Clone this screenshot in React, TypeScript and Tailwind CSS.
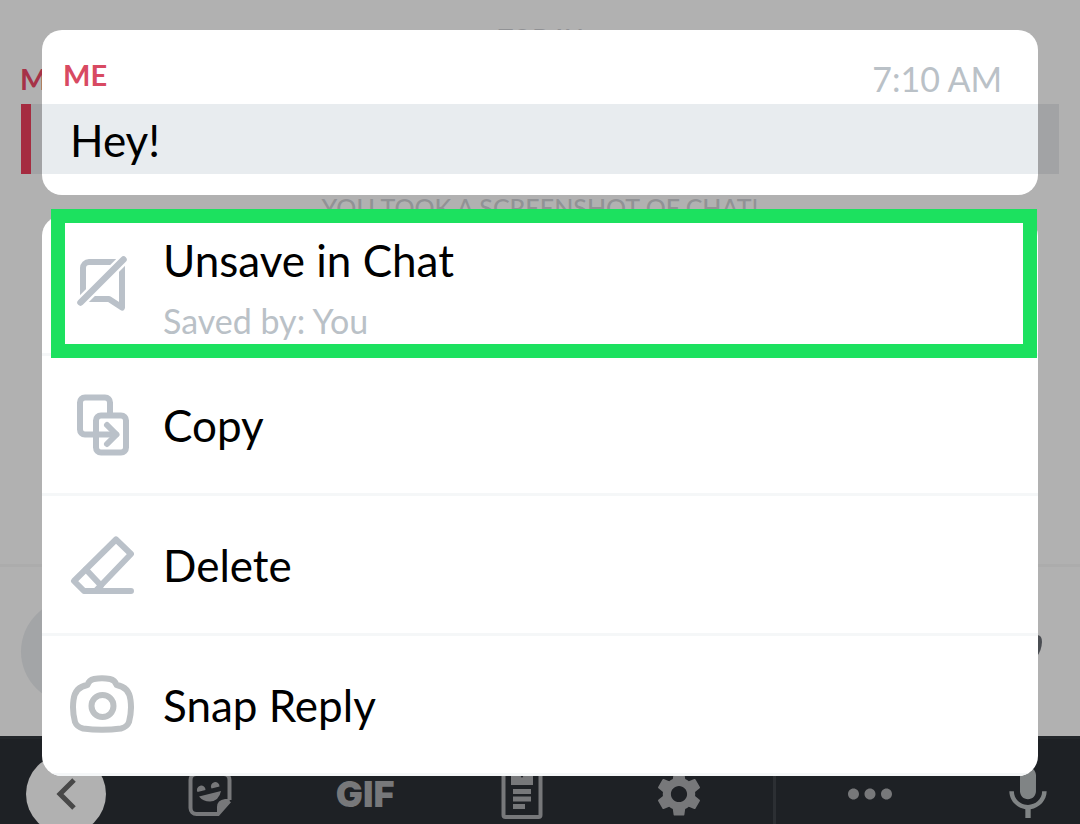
import type { ReactNode } from "react";
import { MdMic, MdMoreHoriz, MdSettings } from "react-icons/md";

function UnsaveIcon() {
  return (
    <svg viewBox="0 0 64 64" className="size-16 shrink-0" fill="none" aria-hidden="true">
      <path
        d="M46 9H19a6 6 0 0 0-6 6V46H39L52 54.500V12"
        stroke="#bac1c9"
        strokeWidth="6"
        strokeLinejoin="round"
      />
      <path d="M5 55L57 3" stroke="#fff" strokeWidth="11" />
      <path d="M10.500 49.500L53.500 6.500" stroke="#bac1c9" strokeWidth="6.500" strokeLinecap="round" />
    </svg>
  );
}

function CopyIcon() {
  return (
    <svg
      viewBox="0 0 64 64"
      className="size-16 shrink-0"
      fill="none"
      stroke="#bac1c9"
      strokeWidth="6"
      strokeLinecap="round"
      strokeLinejoin="round"
      aria-hidden="true"
    >
      <path d="M40 21V9.500a5 5 0 0 0-5-5H15a5 5 0 0 0-5 5v27a5 5 0 0 0 5 5h31" />
      <rect x="26" y="22.500" width="30" height="37" rx="5" />
      <path d="M37 32l9.500 9.500-9.500 9.500" />
    </svg>
  );
}

function EraserIcon() {
  return (
    <svg
      viewBox="0 0 64 64"
      className="size-16 shrink-0"
      fill="none"
      stroke="#bac1c9"
      strokeWidth="6"
      strokeLinecap="round"
      strokeLinejoin="round"
      aria-hidden="true"
    >
      <path d="M61 58H14L4 48 46 6.500l15 14.500L26 57.500" />
      <path d="M16 36.500l15 16" />
    </svg>
  );
}

function CameraIcon() {
  return (
    <svg
      viewBox="0 0 64 64"
      className="size-16 shrink-0"
      fill="none"
      stroke="#bdc1c4"
      strokeWidth="6"
      strokeLinejoin="round"
      aria-hidden="true"
    >
      <path d="M24 6Q32 4.500 40 6Q45 7 46.500 12Q59 14 60.500 27Q62 38 59 49Q57 54 51 55.500Q32 58 13 55.500Q7 54 5 49Q2 38 3.500 27Q5 14 17.500 12Q19 7 24 6Z" />
      <circle cx="32.500" cy="33" r="11" />
    </svg>
  );
}

function StickerIcon() {
  return (
    <svg viewBox="0 0 44 44" className="ml-1 size-11" fill="none" aria-hidden="true">
      <path
        d="M41.500 28V8a6 6 0 0 0-6-6H8.500a6 6 0 0 0-6 6v28a6 6 0 0 0 6 6H30L41.500 29"
        stroke="#77787a"
        strokeWidth="4"
      />
      <path
        d="M43 27h-6q-8 1-8 8v8ZM9.500 20a4.300 4.300 0 1 1 8-2ZM23.500 16.500a4.300 4.300 0 1 1 8-2ZM11 24.500L33 19q-2 10-11 10.500-7 0-11-5Z"
        fill="#77787a"
      />
    </svg>
  );
}

function ClipboardIcon() {
  return (
    <svg viewBox="0 0 44 52" className="h-13 w-11" fill="none" aria-hidden="true">
      <rect x="3.500" y="6" width="37" height="43" rx="2" stroke="#77787a" strokeWidth="4" />
      <path d="M11 4h7l4 6 4-6h7v13H11Z" fill="#77787a" />
      <path d="M13 23.500h18M13 31h18M13 38.500h12" stroke="#77787a" strokeWidth="5" />
    </svg>
  );
}

function MenuItem({
  icon,
  label,
  note,
}: {
  icon: ReactNode;
  label: string;
  note?: string;
}) {
  return (
    <button
      type="button"
      className="flex h-[140px] w-full items-center gap-[29px] border-b-[3px] border-[#f5f7f8] pl-7 text-left"
    >
      {icon}
      <span className={note ? "pt-2" : ""}>
        <span className="block text-[44px] leading-16 text-black">{label}</span>
        {note && (
          <span className="block text-[34px] leading-[58px] text-[#bac1c7]">
            {note}
          </span>
        )}
      </span>
    </button>
  );
}

function Conversation() {
  return (
    <div className="flex h-screen flex-col overflow-hidden bg-[#b1b1b1] pt-[21px] text-[#919295]">
      <p className="text-center text-[25px] leading-8 font-medium">TODAY</p>
      <p className="mt-2.5 px-5 text-[29px] leading-8 font-bold text-[#a63247]">ME</p>
      <div className="mx-[21px] mt-[9px] h-[70px] shrink-0 border-l-[10px] border-[#a52b40] bg-[#a2a3a5]" />
      <p className="mt-[17px] text-center text-[25px] leading-8 font-medium">
        YOU TOOK A SCREENSHOT OF CHAT!
      </p>

      {/* Composer */}
      <div className="mt-auto flex h-[172px] shrink-0 items-center justify-between border-t-[3px] border-[#acacac] px-[21px]">
        <div className="h-[105px] w-4/5 rounded-full bg-[#a3a5a7]" />
        <svg viewBox="0 0 48 28" className="mr-3 mb-2 h-7 w-12" aria-hidden="true">
          <path d="M8 1H38Q43 1 43 8Q42 27 24 27T5 8Q5 1 8 1Z" fill="#4a4d52" />
        </svg>
      </div>

      {/* Keyboard toolbar */}
      <div className="h-[88px] shrink-0 overflow-hidden border-t-[3px] border-[#23272b] bg-[#1e2125]">
        <div className="flex h-[110px] items-center text-[#77787a] [&>button]:flex [&>button]:justify-center">
          <div className="w-[130px] pl-[26px]">
            <button
              type="button"
              aria-label="Back"
              className="flex size-20 items-center justify-center rounded-full bg-[#b1b1b1]"
            >
              <svg viewBox="0 0 32 32" className="size-8" fill="none" aria-hidden="true">
                <path d="M24 2L10 16l14 14" stroke="#484848" strokeWidth="5" />
              </svg>
            </button>
          </div>
          <button type="button" aria-label="Stickers" className="flex-1">
            <StickerIcon />
          </button>
          <button
            type="button"
            className="flex-1 font-[Inter,sans-serif] text-[36px] leading-10 font-black"
          >
            GIF
          </button>
          <button type="button" aria-label="Clipboard" className="flex-1">
            <ClipboardIcon />
          </button>
          <button type="button" aria-label="Settings" className="flex-1">
            <MdSettings className="size-[54px]" />
          </button>
          <div className="flex w-[34px] justify-center">
            <div className="h-28 w-[3px] bg-[#2c2f33]" />
          </div>
          <button type="button" aria-label="More" className="flex-1">
            <MdMoreHoriz className="size-[66px]" />
          </button>
          <button
            type="button"
            aria-label="Voice input"
            className="w-[132px] pl-7 text-[#808485]"
          >
            <MdMic className="mr-auto ml-5 size-16" />
          </button>
        </div>
      </div>
    </div>
  );
}

export default function App() {
  return (
    <div className="relative font-[Lato,sans-serif]">
      <Conversation />

      {/* Message preview + actions */}
      <div className="absolute inset-0 flex flex-col gap-[21px] px-[42px] pt-[30px]">
        <section className="rounded-[20px] bg-white pb-[21px]">
          <div className="flex h-[74px] items-end justify-between pr-9 pb-[9px] pl-[21px]">
            <span className="pb-1 text-[29px] leading-8 font-bold text-[#d84a62]">ME</span>
            <time className="text-[34px] leading-8 text-[#bac1c7]">7:10 AM</time>
          </div>
          <p className="h-[70px] bg-[#e8ecef] pl-7 text-[44px] leading-[72px] text-black">
            Hey!
          </p>
        </section>

        <section className="relative">
          <div className="overflow-hidden rounded-[20px] bg-white">
            <MenuItem icon={<UnsaveIcon />} label="Unsave in Chat" note="Saved by: You" />
            <MenuItem icon={<CopyIcon />} label="Copy" />
            <MenuItem icon={<EraserIcon />} label="Delete" />
            <MenuItem icon={<CameraIcon />} label="Snap Reply" />
          </div>
          <div className="pointer-events-none absolute -top-[7px] right-px left-[9px] h-[149px] border-[14px] border-[#1ce15f]" />
        </section>
      </div>
    </div>
  );
}
